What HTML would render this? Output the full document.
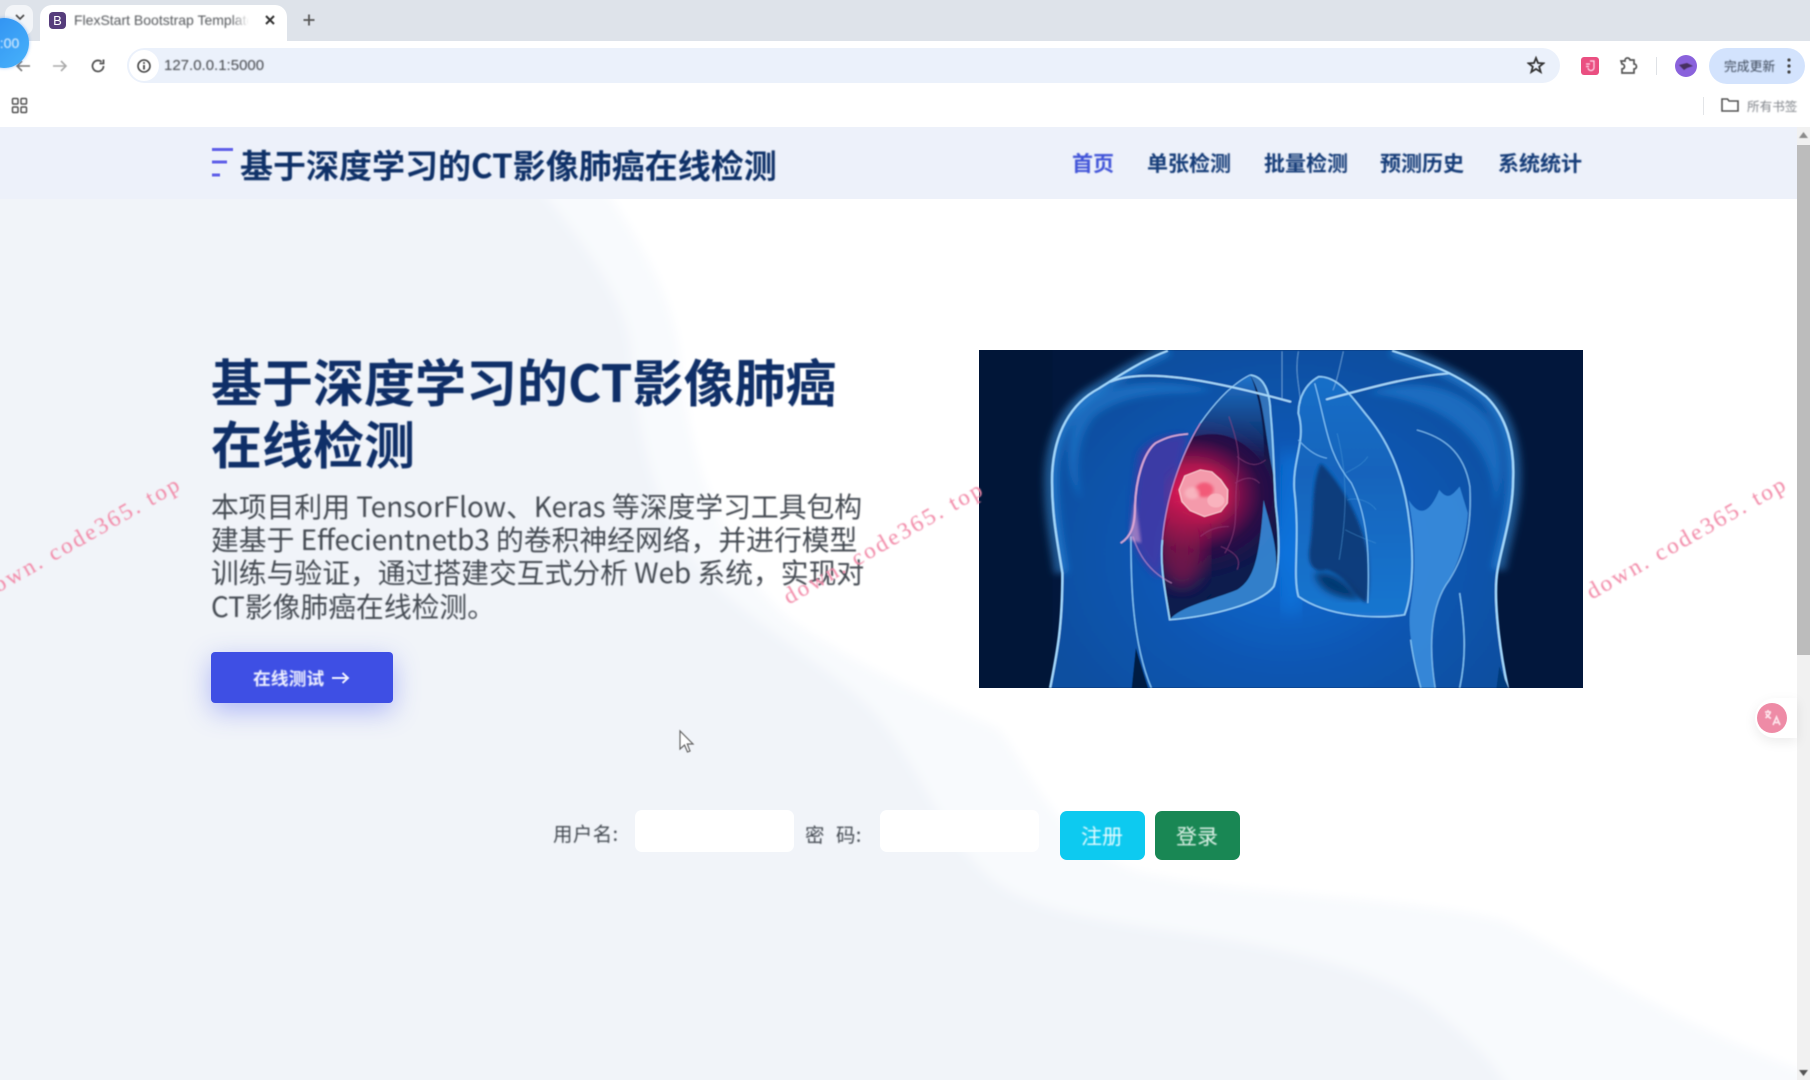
<!DOCTYPE html>
<html lang="zh"><head><meta charset="utf-8"><title>FlexStart Bootstrap Template</title>
<style>
html,body{margin:0;padding:0;width:1810px;height:1080px;overflow:hidden;background:#fff}
body{position:relative;font-family:"Liberation Sans","Noto Sans CJK SC",sans-serif}
.a{position:absolute;white-space:nowrap}
svg.a{filter:blur(.5px)}
.cjk{font-family:"Noto Sans CJK SC","Liberation Sans",sans-serif}
.s{filter:blur(.7px)}
.nav{font-size:21px;font-weight:700;color:#153c78;top:147px;line-height:32px}
.p{left:211px;font-size:27.8px;color:#444a52;line-height:34px}
.wm{font-family:"Liberation Serif",serif;font-size:23.5px;letter-spacing:2.3px;color:#f28aa8;transform:rotate(-29.5deg);transform-origin:center;width:250px;text-align:center;line-height:26px}
.lb{font-size:19.4px;letter-spacing:.5px;line-height:26px;color:#444a52}
</style></head><body>
<!-- page bg -->
<svg class="a" style="left:0;top:0;filter:none" width="1810" height="1080" viewBox="0 0 1810 1080">
<defs><filter id="b2" x="-5%" y="-5%" width="110%" height="110%"><feGaussianBlur stdDeviation="5"/></filter></defs>
<g filter="url(#b2)">
<path fill="#f8fafd" d="M599,180 C640,240 675,300 680,360 C690,470 730,570 790,620 C880,680 960,710 1000,730 C1040,790 1060,840 1132,870 C1220,895 1400,895 1501,920 C1570,950 1640,1010 1825,1080 V1100 H-20 V180Z"/>
<path fill="#f1f4f9" d="M534,180 C580,240 630,300 632,360 C640,470 670,540 720,590 C790,650 850,680 883,723 C920,770 940,830 985,873 C1030,920 1150,925 1246,943 C1330,960 1400,980 1438,1013 C1470,1040 1495,1060 1514,1100 H-20 V180Z"/>
</g></svg>

<!-- browser chrome -->
<div class="a" style="left:0;top:0;width:1810px;height:41px;background:#dee3ea"></div>
<div class="a" style="left:0;top:41px;width:1810px;height:86px;background:#fff"></div>
<div class="a" style="left:5px;top:5px;width:28px;height:30px;border-radius:9px;background:#f3f5f8"></div>
<div class="a" style="left:40px;top:5px;width:247px;height:37px;background:#fff;border-radius:12px 12px 0 0"></div>
<div class="a" style="left:49px;top:12px;width:17px;height:17px;border-radius:4px;background:#563d7c;color:#fff;font-size:13px;line-height:17px;text-align:center">B</div>
<div class="a s" style="left:74px;top:11px;font-size:14px;line-height:19px;color:#55585c;width:175px;overflow:hidden;-webkit-mask-image:linear-gradient(90deg,#000 90%,transparent)">FlexStart Bootstrap Template</div>
<svg class="a" style="left:263px;top:13px" width="14" height="14" viewBox="0 0 14 14"><path d="M3,3 L11,11 M11,3 L3,11" stroke="#333" stroke-width="2"/></svg>
<svg class="a" style="left:302px;top:13px" width="14" height="14" viewBox="0 0 14 14"><path d="M7,1.5 V12.5 M1.5,7 H12.5" stroke="#555" stroke-width="1.8"/></svg>
<svg class="a" style="left:14px;top:12px" width="12" height="10" viewBox="0 0 12 10"><path d="M2,3 L6,7 L10,3" stroke="#444" stroke-width="1.6" fill="none"/></svg>
<!-- toolbar -->
<svg class="a" style="left:13px;top:57px" width="20" height="18" viewBox="0 0 20 18"><path d="M17,9 H5 M9,4 L4,9 L9,14" stroke="#777" stroke-width="1.6" fill="none"/></svg>
<div class="a" style="left:-21px;top:18px;width:50px;height:50px;border-radius:50%;background:linear-gradient(135deg,#2e8df0,#47b2fb);box-shadow:0 0 3px rgba(40,130,240,.5)"></div>
<div class="a s" style="left:-8px;top:33px;font-size:14px;line-height:20px;color:#e9f4ff">1:00</div>
<svg class="a" style="left:50px;top:57px" width="20" height="18" viewBox="0 0 20 18"><path d="M3,9 H15 M11,4 L16,9 L11,14" stroke="#aaa" stroke-width="1.6" fill="none"/></svg>
<svg class="a" style="left:89px;top:57px" width="18" height="18" viewBox="0 0 18 18"><path d="M14.5,9 A5.5,5.5 0 1 1 12.6,4.8 M14.5,2.5 V6.5 H10.5" stroke="#555" stroke-width="1.8" fill="none"/></svg>
<div class="a" style="left:127px;top:48px;width:1433px;height:35px;border-radius:18px;background:#ebf1fb"></div>
<div class="a" style="left:129px;top:50px;width:30px;height:31px;border-radius:50%;background:#fff"></div>
<svg class="a" style="left:136px;top:58px" width="16" height="16" viewBox="0 0 16 16"><circle cx="8" cy="8" r="6" stroke="#444" stroke-width="1.6" fill="none"/><path d="M8,7 V11.5" stroke="#444" stroke-width="1.8"/><circle cx="8" cy="5" r="1" fill="#444"/></svg>
<div class="a s" style="left:164px;top:56px;font-size:15px;line-height:20px;color:#44474c">127.0.0.1:5000</div>
<svg class="a" style="left:1527px;top:56px" width="18" height="18" viewBox="0 0 18 18"><path d="M9,2 L11,7 L16.5,7.3 L12.2,10.7 L13.7,16 L9,13 L4.3,16 L5.8,10.7 L1.5,7.3 L7,7Z" fill="none" stroke="#333" stroke-width="1.8"/></svg>
<div class="a" style="left:1581px;top:57px;width:18px;height:18px;border-radius:3px;background:#ea4f81"></div>
<svg class="a" style="left:1583px;top:59px" width="14" height="14" viewBox="0 0 14 14"><path d="M7,2 H11 V8 A3,3 0 0 1 5,9 M3,5 H7 M3,7.5 H6" stroke="#fde" stroke-width="1.2" fill="none"/></svg>
<svg class="a" style="left:1619px;top:56px" width="20" height="20" viewBox="0 0 20 20"><path d="M2,5 H6 A2.5,2.5 0 0 1 11,4 H15 V8 A2.3,2.3 0 0 1 15,13 V17 H3 V13 A2.4,2.4 0 0 0 3,8Z" fill="none" stroke="#555" stroke-width="1.7"/></svg>
<div class="a" style="left:1656px;top:57px;width:1px;height:18px;background:#dfe2e6"></div>
<div class="a" style="left:1675px;top:55px;width:22px;height:22px;border-radius:50%;background:#8a62dc"></div>
<svg class="a" style="left:1678px;top:60px" width="16" height="12" viewBox="0 0 16 12"><path d="M1,5 L9,3 L15,6 L9,8 L6,10Z" fill="#473060"/></svg>
<div class="a" style="left:1709px;top:48px;width:96px;height:36px;border-radius:18px;background:#d3e3fd"></div>
<div class="a s cjk" style="left:1724px;top:56px;font-size:12.8px;line-height:20px;color:#3a4556">完成更新</div>
<svg class="a" style="left:1786px;top:57px" width="6" height="18" viewBox="0 0 6 18"><circle cx="3" cy="3" r="1.6" fill="#444"/><circle cx="3" cy="9" r="1.6" fill="#444"/><circle cx="3" cy="15" r="1.6" fill="#444"/></svg>
<!-- bookmarks -->
<svg class="a" style="left:11px;top:97px" width="17" height="17" viewBox="0 0 17 17"><g fill="none" stroke="#555" stroke-width="1.5"><rect x="1.5" y="1.5" width="5.5" height="5.5" rx="1"/><rect x="10" y="1.5" width="5.5" height="5.5" rx="1"/><rect x="1.5" y="10" width="5.5" height="5.5" rx="1"/><rect x="10" y="10" width="5.5" height="5.5" rx="1"/></g></svg>
<div class="a" style="left:1703px;top:97px;width:1px;height:18px;background:#e3e5e8"></div>
<svg class="a" style="left:1721px;top:97px" width="18" height="15" viewBox="0 0 18 15"><path d="M1,2 H6.5 L8,4 H17 V14 H1Z" fill="none" stroke="#555" stroke-width="1.6"/></svg>
<div class="a s cjk" style="left:1747px;top:96px;font-size:12.6px;line-height:20px;color:#80848a">所有书签</div>

<!-- nav -->
<div class="a" style="left:0;top:127px;width:1797px;height:71.5px;background:#edf1fa"></div>
<svg class="a" style="left:211px;top:148px" width="23" height="31" viewBox="0 0 23 31"><path d="M1,1.5 H22 M1,14 H16 M1,27 H9" stroke="#5f5fe8" stroke-width="3" fill="none"/></svg>
<div class="a cjk s" style="left:240px;top:140px;font-size:33px;font-weight:700;line-height:48px;color:#0f3168">基于深度学习的CT影像肺癌在线检测</div>
<div class="a cjk s nav" style="left:1072px;color:#4154d8">首页</div>
<div class="a cjk s nav" style="left:1147px">单张检测</div>
<div class="a cjk s nav" style="left:1264px">批量检测</div>
<div class="a cjk s nav" style="left:1380px">预测历史</div>
<div class="a cjk s nav" style="left:1498px">系统统计</div>

<!-- hero -->
<div class="a cjk s" style="left:211px;top:347px;font-size:51px;font-weight:700;line-height:66px;color:#0f2f68">基于深度学习的CT影像肺癌</div>
<div class="a cjk s" style="left:211px;top:409px;font-size:51px;font-weight:700;line-height:66px;color:#0f2f68">在线检测</div>
<div class="a cjk s p" style="top:489px">本项目利用 TensorFlow、Keras 等深度学习工具包构</div>
<div class="a cjk s p" style="top:522px">建基于 Effecientnetb3 的卷积神经网络，并进行模型</div>
<div class="a cjk s p" style="top:555px">训练与验证，通过搭建交互式分析 Web 系统，实现对</div>
<div class="a cjk s p" style="top:589px">CT影像肺癌在线检测。</div>
<div class="a" style="left:211px;top:652px;width:182px;height:51px;border-radius:4px;background:#3e4fe4;box-shadow:0 8px 26px rgba(65,84,241,.38)"></div>
<div class="a cjk s" style="left:253px;top:665px;font-size:17.8px;font-weight:700;line-height:26px;color:#eef0ff">在线测试</div>
<svg class="a" style="left:330px;top:669px" width="21" height="18" viewBox="0 0 21 18"><path d="M2,9 H18 M12.5,4 L18,9 L12.5,14" fill="none" stroke="#eef0ff" stroke-width="1.9"/></svg>

<!-- lung image -->
<svg class="a" style="left:979px;top:350px;filter:none" width="604" height="338" viewBox="48 30 1479 1015" preserveAspectRatio="none">
<defs>
<clipPath id="cl"><rect x="48" y="30" width="1479" height="1015"/></clipPath>
<clipPath id="ll"><path d="M712,105 C745,110 760,150 762,220 C770,320 770,420 775,500 C785,600 785,680 770,740 C740,790 620,830 515,840 C505,760 490,680 497,600 C505,480 540,350 590,250 C630,180 670,130 712,105 Z"/></clipPath>
<radialGradient id="body" gradientUnits="userSpaceOnUse" cx="800" cy="640" r="640"><stop offset="0" stop-color="#0b6cd4"/><stop offset=".55" stop-color="#0a56b2"/><stop offset="1" stop-color="#0b4fa0"/></radialGradient>
<radialGradient id="red" gradientUnits="userSpaceOnUse" cx="570" cy="465" r="260"><stop offset="0" stop-color="#dd1a55"/><stop offset=".35" stop-color="#a4144f"/><stop offset=".65" stop-color="#2c0d45"/><stop offset="1" stop-color="#071b4e"/></radialGradient>
<linearGradient id="rl" x1="0" y1="0" x2="0" y2="1"><stop offset="0" stop-color="#1a6fc8"/><stop offset=".4" stop-color="#1264bc"/><stop offset="1" stop-color="#1a76d0"/></linearGradient>
<linearGradient id="ltop" x1="0" y1="0" x2="0" y2="1"><stop offset="0" stop-color="#2278d2"/><stop offset="1" stop-color="#1c72cc" stop-opacity="0"/></linearGradient>
<filter id="f1"><feGaussianBlur stdDeviation="1.6"/></filter>
<filter id="f3"><feGaussianBlur stdDeviation="4"/></filter>
<filter id="f8"><feGaussianBlur stdDeviation="10"/></filter>
<filter id="f20"><feGaussianBlur stdDeviation="24"/></filter>
</defs>
<g clip-path="url(#cl)">
<rect x="48" y="30" width="1479" height="1015" fill="#02173c"/>
<rect x="48" y="30" width="180" height="1015" fill="#011638"/>
<g filter="url(#f1)">
<path fill="url(#body)" d="M220,1045 C235,950 250,870 250,700 C240,620 222,520 225,400 C230,280 270,190 340,145 C400,100 450,60 510,30 L1060,30 C1130,60 1220,100 1290,170 C1340,230 1360,320 1358,420 C1358,520 1330,620 1320,690 C1310,760 1320,900 1345,1045 Z"/>
<!-- edge glow -->
<path fill="none" stroke="#3a98e8" stroke-width="34" opacity=".5" filter="url(#f8)" d="M250,700 C240,620 222,520 225,400 C230,280 270,190 340,145 C400,100 450,60 510,30 M1060,30 C1130,60 1220,100 1290,170 C1340,230 1360,320 1358,420 C1358,520 1330,620 1320,690"/>
<!-- shoulder highlights -->
<path d="M300,180 C350,130 500,110 620,150 C560,170 420,140 330,230 C290,290 280,380 300,480 C250,400 260,250 300,180Z" fill="#2f8ce0" opacity=".45" filter="url(#f8)"/>
<path d="M1000,160 C1100,110 1220,130 1300,240 C1340,330 1330,420 1310,520 C1320,360 1240,190 1000,160Z" fill="#2f8ee2" opacity=".45" filter="url(#f8)"/>
<rect x="790" y="340" width="45" height="480" fill="#0b7ce6" opacity=".7" filter="url(#f20)"/>
<!-- left side glow -->
<path d="M440,340 C470,290 520,280 560,285 L510,620 L490,720 C450,680 420,620 420,560 C425,480 430,400 440,340Z" fill="#5a2aa0" opacity=".6" filter="url(#f8)"/>
<!-- left lung -->
<path fill="url(#red)" d="M712,105 C745,110 760,150 762,220 C770,320 770,420 775,500 C785,600 785,680 770,740 C740,790 620,830 515,840 C505,760 490,680 497,600 C505,480 540,350 590,250 C630,180 670,130 712,105 Z"/>
<g clip-path="url(#ll)"><ellipse cx="545" cy="620" rx="60" ry="130" fill="#a3124e" opacity=".6" filter="url(#f20)"/></g>
<path d="M515,840 C540,800 620,780 680,750 C720,720 735,660 745,480 C755,540 790,640 770,740 C740,790 620,830 515,840Z" fill="#3a90e0" opacity=".85"/>
<path d="M712,105 C745,110 760,150 762,220 C768,300 770,350 772,420 C755,340 750,240 735,170 C725,130 712,105 712,105Z" fill="#3f92e0" opacity=".75"/>
<path d="M590,250 C630,180 670,130 712,105 C735,170 750,280 745,370 C690,290 640,270 575,290Z" fill="url(#ltop)" opacity=".95"/>
<g fill="none" stroke="#a04a88" stroke-width="2.5" opacity=".55"><path d="M660,230 C680,300 690,350 680,420 C670,500 690,560 650,640"/><path d="M680,350 C710,380 730,380 750,360"/><path d="M675,430 C700,410 720,410 735,430"/><path d="M660,560 C630,560 610,570 590,590"/><path d="M640,620 C680,640 690,660 680,690"/></g>
<path fill="none" stroke="#94d0f8" stroke-width="4.5" d="M712,105 C745,110 760,150 762,220 C770,320 770,420 775,500 C785,600 785,680 770,740 C740,790 620,830 515,840 C505,760 490,680 497,600"/>
<path fill="none" stroke="#b98fd0" stroke-width="3" d="M497,600 C505,480 540,350 590,250"/>
<path fill="none" stroke="#8ac8f6" stroke-width="3" d="M590,250 C630,180 670,130 712,105"/>
<!-- right lung -->
<path fill="url(#rl)" d="M880,110 C930,110 960,170 1000,230 C1060,320 1090,430 1100,530 C1115,650 1110,760 1090,825 C1020,840 900,830 830,770 C815,700 835,600 820,450 C815,360 850,300 830,220 C830,170 850,130 880,110 Z"/>
<path fill="#07356f" opacity=".85" filter="url(#f3)" d="M885,370 C935,430 985,540 1000,640 C1005,700 1005,770 995,790 C960,760 950,710 900,690 C870,700 850,680 858,620 C870,520 860,440 885,370Z"/>
<path fill="#042a5c" opacity=".8" filter="url(#f8)" d="M870,700 C910,690 950,720 985,780 C930,775 880,760 870,700Z"/>
<g fill="none" stroke="#4a97d8" stroke-width="2.5" opacity=".5"><path d="M925,280 C950,400 950,520 930,660"/><path d="M945,400 C975,380 990,370 1000,350"/><path d="M950,480 C980,470 1010,490 1020,510"/><path d="M945,570 C975,590 1000,600 1020,610"/></g>
<path fill="none" stroke="#8ccaf6" stroke-width="4.5" d="M880,110 C930,110 960,170 1000,230 C1060,320 1090,430 1100,530 C1115,650 1110,760 1090,825 C1020,840 900,830 830,770 C815,700 835,600 820,450 C815,360 850,300 830,220 C830,170 850,130 880,110 Z"/>
<path fill="none" stroke="#7cc0f4" stroke-width="3" d="M870,130 C900,260 900,340 960,430 C1000,530 1005,640 1000,790"/>
<path fill="none" stroke="#6ab0ec" stroke-width="3" d="M830,300 C860,340 880,350 900,355"/>
<!-- right side pocket -->
<path fill="#3f94e2" opacity=".8" d="M1100,480 C1125,530 1150,525 1175,450 C1195,480 1205,470 1225,440 L1245,520 C1240,600 1220,680 1190,740 C1150,810 1150,930 1165,1045 L1130,1045 C1115,950 1095,880 1105,800 C1120,680 1115,580 1100,480Z"/>
<path fill="none" stroke="#81c2f2" stroke-width="3.5" opacity=".85" d="M1120,270 C1180,290 1235,330 1250,440 C1255,560 1240,640 1200,720 C1150,800 1150,930 1165,1045"/>
<!-- collarbones -->
<g fill="none" stroke="#a4d6f8" stroke-linecap="round"><path stroke-width="6" d="M370,125 C450,85 600,115 810,185"/><path stroke-width="6" d="M900,178 C1000,145 1100,110 1200,100"/><path stroke-width="2.5" opacity=".5" d="M790,35 V180 M830,35 C820,100 835,150 835,190 M940,35 C930,90 925,120 915,150"/></g>
<path fill="none" stroke="#a0d6fa" stroke-width="6" d="M222,1045 C237,950 252,870 252,700 C242,620 224,520 227,400 C232,280 272,190 342,145 C400,100 450,60 510,32 M1060,32 C1130,60 1220,100 1290,170 C1340,230 1360,320 1356,420 C1356,520 1328,620 1318,690 C1308,760 1318,900 1343,1045"/>
<path fill="none" stroke="#7cc0f2" stroke-width="3.5" d="M420,590 C420,700 420,900 470,1045 M1105,900 C1110,950 1120,1000 1130,1045 M1225,760 C1240,880 1240,960 1225,1045"/>
<path fill="none" stroke="#f0b6da" stroke-width="5" opacity=".85" d="M395,610 C420,590 430,560 430,500 C432,420 450,340 480,310 C510,290 530,285 560,282"/>
<path fill="none" stroke="#d89ad0" stroke-width="3.5" opacity=".6" d="M425,590 C440,650 470,700 520,730"/>
<path d="M430,480 L445,610 L415,600Z" fill="#e7a7d6" opacity=".55" filter="url(#f3)"/>
<!-- dark triangles -->
<path d="M432,925 L462,1045 L422,1045Z" fill="#021a42"/>
<path d="M1322,980 L1345,1045 L1315,1045Z" fill="#043a7c"/>
<!-- tumor -->
<circle cx="590" cy="462" r="75" fill="#f3265a" opacity=".3" filter="url(#f20)"/>
<path fill="#f49aab" d="M590,390 L618,396 L640,420 L657,450 L656,490 L640,515 L600,530 L565,512 L545,485 L538,450 L552,408Z" stroke="#ffd3da" stroke-width="2.5"/>
<circle cx="600" cy="450" r="22" fill="#f23f63" opacity=".7" filter="url(#f3)"/>
<circle cx="628" cy="482" r="21" fill="#fab6c0" opacity=".9"/>
<circle cx="570" cy="460" r="18" fill="#fbc6cc" opacity=".6" filter="url(#f3)"/>
</g>
</g></svg>

<!-- watermarks -->
<div class="a wm s" style="left:-44px;top:525px">down. code365. top</div>
<div class="a wm s" style="left:759px;top:530px">down. code365. top</div>
<div class="a wm s" style="left:1562px;top:525px">down. code365. top</div>

<!-- form -->
<div class="a cjk s lb" style="left:553px;top:820px">用户名:</div>
<div class="a" style="left:635px;top:810px;width:159px;height:42px;border-radius:7px;background:#fff"></div>
<div class="a cjk s lb" style="left:805px;top:821px">密</div>
<div class="a cjk s lb" style="left:836px;top:821px">码:</div>
<div class="a" style="left:880px;top:810px;width:159px;height:42px;border-radius:7px;background:#fff"></div>
<div class="a" style="left:1060px;top:811px;width:85px;height:49px;border-radius:7px;background:#0dcaf0"></div>
<div class="a cjk s" style="left:1081px;top:821px;font-size:21px;line-height:30px;color:#e6fbff">注册</div>
<div class="a" style="left:1155px;top:811px;width:85px;height:49px;border-radius:7px;background:#198754"></div>
<div class="a cjk s" style="left:1176px;top:821px;font-size:21px;line-height:30px;color:#dff2e8">登录</div>

<!-- cursor -->
<svg class="a" style="left:678px;top:729px" width="18" height="26" viewBox="0 0 18 26"><path d="M2,2 V20 L6.5,16 L9.5,23 L12,22 L9.3,15 L15,15Z" fill="#fff" stroke="#666" stroke-width="1.2"/></svg>

<!-- scrollbar -->
<div class="a" style="left:1797px;top:127px;width:13px;height:953px;background:#f1f1f1"></div>
<div class="a" style="left:1797px;top:145px;width:13px;height:510px;background:#bcbcbc"></div>
<svg class="a" style="left:1799px;top:132px" width="9" height="6" viewBox="0 0 9 6"><path d="M0,6 L4.5,0 L9,6Z" fill="#8a8a8a"/></svg>
<svg class="a" style="left:1799px;top:1070px" width="9" height="6" viewBox="0 0 9 6"><path d="M0,0 L4.5,6 L9,0Z" fill="#555"/></svg>

<!-- floating translate button -->
<div class="a" style="left:1755px;top:698px;width:42px;height:40px;border-radius:20px 0 0 20px;background:#fff;box-shadow:0 4px 12px rgba(0,0,0,.08)"></div>
<div class="a" style="left:1757px;top:703px;width:30px;height:30px;border-radius:50%;background:#ee8ba6"></div>
<svg class="a s" style="left:1762px;top:708px" width="20" height="20" viewBox="0 0 20 20"><path d="M3,4 H9 M6,2 V4 M3.5,10 C6,8 8,6 8.5,4 M4,5.5 C5,8 7,9.5 9,10.5 M11,17 L14.5,9 L18,17 M12.5,14.5 H16.5" fill="none" stroke="#fde3ea" stroke-width="1.7"/></svg>
</body></html>
